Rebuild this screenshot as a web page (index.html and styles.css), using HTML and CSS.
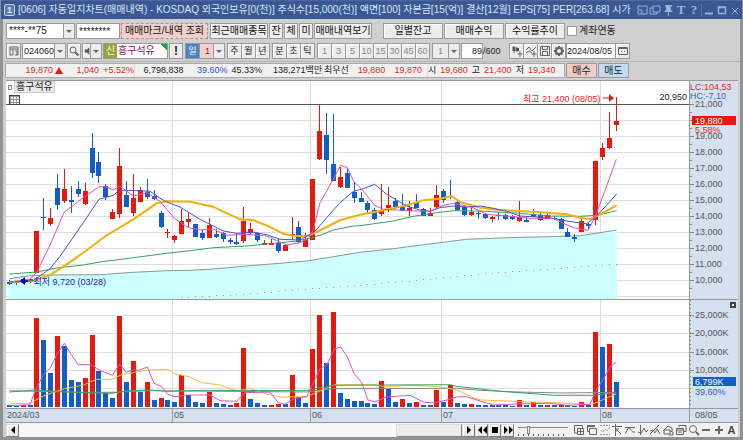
FILE: index.html
```html
<!DOCTYPE html>
<html lang="ko">
<head>
  <meta charset="UTF-8">
  <meta name="viewport" content="width=device-width, initial-scale=1.0">
  <title>[0606] 자동일지차트</title>
  <link rel="stylesheet" href="styles.css">
</head>
<body>
  <div class="window">
    <header class="titlebar">
      <span class="badge">1</span>
      <h1>[0606] 자동일지차트(매매내역) - KOSDAQ 외국인보유[0(천)] 주식수[15,000(천)] 액면[100] 자본금[15(억)] 결산[12월] EPS[75] PER[263.68] 시가</h1>
      <div class="win-buttons">
        <button aria-label="화면 크기"><svg viewBox="0 0 12 12"><path d="M2 5V2h9v8H6M2 6h4v4H2z"/></svg></button>
        <button aria-label="복제"><svg viewBox="0 0 12 12"><path d="M4 2h7v6H4zM4 4H1v6h7V8"/></svg></button>
        <button aria-label="고정"><svg viewBox="0 0 12 12"><path class="solid" d="M3 1h7v1L9 3v3l2 2H7v4H6V8H2l2-2V3L3 2z"/></svg></button>
        <button class="letter" aria-label="글꼴">T</button>
        <button class="letter" aria-label="도움말">?</button>
        <i></i>
        <button aria-label="최소화"><svg viewBox="0 0 12 12"><path d="M2 9.5h8" stroke-width="2"/></svg></button>
        <button aria-label="최대화"><svg viewBox="0 0 12 12"><path d="M2.5 3.5h7v6h-7zM2 3h8" stroke-width="1.5"/></svg></button>
        <button aria-label="닫기"><svg viewBox="0 0 12 12"><path d="M3 4l6 6M9 4l-6 6"/></svg></button>
      </div>
    </header>

    <div class="toolbar account-bar">
      <span class="drop w-account"><select aria-label="계좌번호"><option>****-**75</option></select></span>
      <input class="w-pass" type="text" value="********" aria-label="비밀번호">
      <button class="w-mark active">매매마크/내역 조회</button>
      <button class="w-58 gap">최근매매종목</button>
      <button class="w-14">잔</button>
      <button class="w-14">체</button>
      <button class="w-14">미</button>
      <button class="w-58">매매내역보기</button>
      <button class="w-60 gap-wide">일별잔고</button>
      <button class="w-60">매매수익</button>
      <button class="w-60">수익률추이</button>
      <label class="check"><input type="checkbox">계좌연동</label>
    </div>

    <div class="toolbar code-bar">
      <button class="w-15" aria-label="메뉴"><svg viewBox="0 0 12 12"><path d="M2 10V2h8v8H7M2 4h8M5 4v6H2"/><path d="M7 6h2v4"/></svg></button>
      <span class="drop w-code"><input type="text" value="024060" aria-label="종목코드"></span>
      <button class="w-14" aria-label="종목검색"><svg viewBox="0 0 12 12"><circle cx="5" cy="5" r="3"/><path d="M7 7l3.500 3.500" stroke-width="2"/></svg></button>
      <span class="drop w-sound"><button aria-label="소리"><svg viewBox="0 0 12 12"><path class="solid" d="M1 4h3l3-3v10L4 8H1z"/><path d="M8 4h3M8 6h3M8 8h3"/></svg></button></span>
      <div class="stock"><b>신</b><span>흥구석유</span></div>
      <button class="w-14 strong">!</button>
      <div class="group">
        <button class="day">일</button>
        <span class="drop w-days"><select aria-label="일수"><option>1</option></select></span>
      </div>
      <div class="group">
        <button>주</button><button>월</button><button>년</button>
      </div>
      <div class="group">
        <button>분</button><button>초</button><button>틱</button>
      </div>
      <div class="group minutes">
        <button disabled>1</button><button disabled>3</button><button disabled>5</button><button disabled>10</button><button disabled>15</button><button disabled>30</button><button disabled>45</button><button disabled>60</button>
      </div>
      <span class="drop w-step gap"><select aria-label="간격" disabled><option>1</option></select></span>
      <input class="w-count" type="text" value="89" id="count" aria-label="조회 개수">
      <label class="total" for="count">/600</label>
      <div class="group">
        <button aria-label="차트유형"><svg viewBox="0 0 12 12"><path d="M3 1v7M6 2v5M9 6v6M6.500 9h5"/><path class="solid" d="M1.500 2h3v4h-3zM5 3h3v3H5z"/></svg></button>
        <button aria-label="지표추가"><svg viewBox="0 0 12 12"><path d="M1 5l3-3 3 4 4-4M1 8l3-2 3 2M9 6v6M6.500 9h5"/></svg></button>
        <button aria-label="저장"><svg viewBox="0 0 12 12"><path d="M1.500 1.500h9v9h-9zM3.500 1.500v3h5v-3M3.500 10.500v-4h5v4"/></svg></button>
        <button aria-label="설정"><svg viewBox="0 0 12 12"><circle cx="6" cy="6" r="3" stroke-width="2"/><path d="M6 1v2M6 9v2M1 6h2M9 6h2M2.500 2.500l1 1M8.500 8.500l1 1M9.500 2.500l-1 1M3.500 8.500l-1 1" stroke-width="2"/></svg></button>
      </div>
      <div class="group date">
        <input type="text" value="2024/08/05" aria-label="기준일">
        <button aria-label="달력"><svg viewBox="0 0 12 12"><path d="M1.500 2.500h9v7h-9zM2 3.500h8M4.500 6v1M7.500 6v1"/></svg></button>
      </div>
    </div>

    <div class="quote-bar">
      <div class="quotes">
        <div class="cell change"><span>19,870</span><i class="up"></i><span class="diff">1,040</span><span class="rate">+5.52%</span></div>
        <div class="cell volume"><span>6,798,838</span><span class="blue">39.60%</span><span>45.33%</span></div>
        <div class="cell amount">138,271백만</div>
        <div class="cell best"><b>최우선</b><span>19,880</span><span>19,870</span></div>
        <div class="cell ohl"><b>시</b><span>19,680</span><b>고</b><span>21,400</span><b>저</b><span>19,340</span></div>
      </div>
      <button class="buy">매수</button>
      <button class="sell">매도</button>
    </div>

    <main class="chart">
      <section class="panel price-panel">
        <div class="plot">
          <svg id="priceChart" viewBox="0 0 683 218" preserveAspectRatio="none"></svg>
          <div class="legend"><i></i><span>흥구석유</span></div>
          <div class="table-icon"></div>
          <span class="note high">최고 21,400 (08/05) <svg viewBox="0 0 12 8"><path d="M0 4h7" stroke="#e8180c"/><path fill="#e8180c" d="M6 0l5 4-5 4z"/></svg></span>
          <span class="note base">20,950</span>
          <span class="note low"><svg viewBox="0 0 12 8"><path fill="#0000f0" d="M6 0v8L1 4zM6 3h3v2H6z"/></svg> 최저 9,720 (03/28)</span>
        </div>
        <svg class="axis" id="priceAxis" width="49" height="218"></svg>
      </section>
      <section class="panel volume-panel">
        <div class="plot">
          <svg id="volumeChart" viewBox="0 0 683 108" preserveAspectRatio="none"></svg>
        </div>
        <svg class="axis" id="volumeAxis" width="49" height="108"></svg>
      </section>
      <div class="time-axis">
        <span>2024/03</span><span>05</span><span>06</span><span>07</span><span>08</span><span class="today">08/05</span>
      </div>
    </main>

    <footer class="bottom-bar">
      <button class="step" aria-label="왼쪽"><svg viewBox="0 0 12 12"><path class="solid" d="M8 2v8L4 6z"/></svg></button>
      <div class="track"><div class="thumb"></div></div>
      <button class="step" aria-label="오른쪽"><svg viewBox="0 0 12 12"><path class="solid" d="M4 2v8l4-4z"/></svg></button>
      <button class="step" aria-label="뒤로"><svg viewBox="0 0 12 12"><path class="solid" d="M6 2v8L2 6zM11 2v8L7 6z"/></svg></button>
      <button class="step" aria-label="정지"><svg viewBox="0 0 12 12"><path class="solid" d="M3 3h6v6H3z"/></svg></button>
      <button class="step" aria-label="앞으로"><svg viewBox="0 0 12 12"><path class="solid" d="M2 2v8l4-4zM7 2v8l4-4z"/></svg></button>
      <input class="speed" type="range" min="0" max="10" value="2" aria-label="속도">
      <div class="draw-tools">
        <button aria-label="분할"><svg viewBox="0 0 12 12"><path d="M4 9H1.500V1.500h8V4M4.500 4.500h6v6h-6zM7.500 5v5M5 7.500h5"/></svg></button>
        <button aria-label="겹치기"><svg viewBox="0 0 12 12"><path d="M3 7.500H1.500v-6h7V3M3.500 4.500h7v6h-7zM2 2.500h6"/></svg></button>
        <button class="faint" aria-label="추세"><svg viewBox="0 0 12 12"><path d="M1 1.500h10M1 10.500h10M2 6l2 2 2-3 2 2 3-4" stroke-dasharray="2 1"/></svg></button>
        <button class="on" aria-label="십자선"><svg viewBox="0 0 12 12"><path d="M1 2.500h10M4.500 0v12M5 5l5 5M5 5v3M5 5h3"/></svg></button>
        <button aria-label="수평선"><svg viewBox="0 0 12 12"><path d="M1 3.500h10M1 9c2 0 2-5 4-5s2 5 6 4"/></svg></button>
        <button aria-label="수직선"><svg viewBox="0 0 12 12"><path d="M3.500 1v10M1 8l3 1 3-5 2 4 2-2"/></svg></button>
        <button aria-label="추세선"><svg viewBox="0 0 12 12"><path d="M1 10l9-9M1 7l3-1 2 3 2-4 3 5"/></svg></button>
        <button aria-label="도형"><svg viewBox="0 0 12 12"><path d="M1 7l5-5 4 2v3M2 6h6v4H2zM8 7l3 1v3H7"/></svg></button>
        <button aria-label="창 목록"><svg viewBox="0 0 12 12"><path d="M4 3V1.500h7v6H9M1.500 4.500h7v6h-7zM1.500 6h7M3 8h4"/></svg></button>
        <button aria-label="돋보기"><svg viewBox="0 0 12 12"><circle cx="5" cy="5" r="3.500"/><path d="M8 8l3 3" stroke-width="2"/></svg></button>
        <button aria-label="축소"><svg viewBox="0 0 12 12"><path d="M2 6h8" stroke-width="2"/></svg></button>
        <button aria-label="확대"><svg viewBox="0 0 12 12"><path d="M2 6h8M6 2v8" stroke-width="2"/></svg></button>
        <button class="auto">A</button>
      </div>
    </footer>
  </div>
  <script src="script.js"></script>
</body>
</html>
```

FILE: styles.css
```css
* {
  box-sizing: border-box;
}
body {
  margin: 0;
  font-family: "Liberation Sans", "Noto Sans CJK KR", sans-serif;
  font-size: 9px;
  line-height: 12px;
  color: #222;
}
button, input, select {
  font: inherit;
  color: inherit;
  margin: 0;
  padding: 0;
  border: 1px solid #999;
  border-radius: 0;
  height: 16px;
  background: #fff;
  min-width: 0;
}
button {
  background: #ececec;
  box-shadow: inset 1px 1px #fff;
  white-space: nowrap;
  display: flex;
  align-items: center;
  justify-content: center;
  flex-shrink: 0;
}
button svg {
  width: 12px;
  height: 12px;
  fill: none;
  stroke: #666;
  flex-shrink: 0;
}
svg .solid {
  fill: #555;
  stroke: none;
}
.window {
  min-height: 100vh;
  border: 3px solid #929292;
  border-top: 1px solid #53649a;
  border-bottom-width: 4px;
  background: #d0d0d0;
  display: flex;
  flex-direction: column;
}

/* title bar */
.titlebar {
  height: 18px;
  margin: 0 -2px;
  padding: 0 1px 0 3px;
  background: #3a5896;
  color: #dfe6f5;
  display: flex;
  align-items: center;
  gap: 3px;
}
.badge {
  width: 11px;
  height: 12px;
  border: 1px solid #c8d3ec;
  border-radius: 2px;
  background: #5b78b3;
  font-weight: bold;
  line-height: 10px;
  text-align: center;
}
.titlebar h1 {
  flex: 1;
  min-width: 0;
  margin: 0;
  font-size: 10px;
  font-weight: normal;
  white-space: nowrap;
  overflow: hidden;
}
.win-buttons {
  display: flex;
  align-items: center;
  gap: 1px;
}
.win-buttons button {
  width: 12px;
  height: 14px;
  border: none;
  background: none;
  box-shadow: none;
}
.win-buttons svg {
  stroke: #9fb0d6;
}
.win-buttons .solid {
  fill: #9fb0d6;
}
.win-buttons .letter {
  font-family: "Liberation Serif", serif;
  font-size: 13px;
  font-weight: bold;
  color: #9fb0d6;
}
.win-buttons i {
  width: 1px;
  height: 12px;
  background: #5d76ad;
}

/* toolbars */
.toolbar {
  display: flex;
  align-items: center;
  gap: 1px;
  padding: 0 3px;
  height: 20px;
}
.account-bar {
  margin-top: 2px;
  font-size: 10px;
}
.account-bar button {
  color: #111;
}
.w-account {
  width: 69px;
}
.w-pass {
  width: 44px;
  padding-left: 2px;
}
.w-mark {
  width: 87px;
}
.toolbar .active {
  background: #f3d0cb;
  border: 1px dashed #b98d88;
  box-shadow: none;
}
.w-58 {
  width: 58px;
}
.w-14 {
  width: 14px;
}
.w-15 {
  width: 15px;
}
.w-60 {
  width: 60px;
}
.w-step {
  width: 28px;
}
.w-days {
  width: 26px;
}
.w-code {
  width: 44px;
}
.w-sound {
  width: 20px;
}
.w-count {
  width: 22px;
  text-align: right;
}
.gap {
  margin-left: 1px;
}
.gap-wide {
  margin-left: 10px;
}
.check {
  display: flex;
  align-items: center;
  gap: 2px;
  padding-left: 1px;
}
.check input {
  appearance: none;
  width: 10px;
  height: 10px;
}

.drop {
  display: flex;
  position: relative;
  flex-shrink: 0;
}
.drop select, .drop input, .drop > button {
  appearance: none;
  width: 100%;
  padding: 0 10px 0 2px;
}
.drop::after {
  content: "";
  position: absolute;
  right: 1px;
  top: 1px;
  width: 10px;
  height: 14px;
  border-left: 1px solid #999;
  background: #ececec;
  pointer-events: none;
}
.drop::before {
  content: "";
  position: absolute;
  z-index: 1;
  right: 3px;
  top: 7px;
  border: 3px solid transparent;
  border-top-color: #666;
  border-bottom: none;
  pointer-events: none;
}
.code-bar .drop input {
  padding-left: 1px;
}
.drop > button svg {
  width: 9px;
}
.stock {
  display: flex;
  align-items: center;
  width: 65px;
  height: 16px;
  border: 1px solid #999;
  background: linear-gradient(45deg, transparent 92%, #1fa050 92%), #fff;
  font-size: 10px;
  color: #8c1464;
}
.stock b {
  width: 13px;
  height: 14px;
  margin-right: 1px;
  background: #97a336;
  color: #fff;
  font-weight: normal;
  line-height: 14px;
  text-align: center;
}
.strong {
  font-size: 12px;
  font-weight: bold;
}
.group {
  display: flex;
  flex-shrink: 0;
  margin-left: 1px;
}
.group > button {
  width: 15px;
  margin-right: -1px;
}
.group > button:last-child {
  margin-right: 0;
}
.group .day {
  background: #4c82c4;
  box-shadow: none;
  color: #fff;
}
.w-days select {
  background: #f3d0cb;
  color: #8e2222;
  padding-left: 5px;
}
.minutes {
  color: #888;
}
.w-step select {
  background: #ececec;
  color: #888;
  opacity: 1;
  padding-left: 5px;
}
.total {
  width: 24px;
  margin-left: -1px;
}
.date {
  margin-left: -1px;
}
.date input {
  width: 50px;
  margin-right: -1px;
}

/* quotes */
.quote-bar {
  display: flex;
  gap: 1px;
  padding: 1px 2px 0;
  border-top: 1px solid #b4b4b4;
}
.quotes {
  display: flex;
  width: 560px;
  height: 15px;
  border: 1px solid #aaa;
  background: #f1f1f1;
  line-height: 13px;
}
.cell {
  display: flex;
  flex-shrink: 0;
  justify-content: flex-end;
  border-right: 1px solid #ddd;
  white-space: nowrap;
}
.cell:last-child {
  border-right: none;
}
.cell b {
  font-weight: normal;
}
.change, .best span, .ohl span {
  color: #e8281c;
}
.change {
  width: 129px;
}
.up {
  margin: 3px 0 0 2px;
  border: 4px solid transparent;
  border-top: none;
  border-bottom: 7px solid #e8180c;
  height: 0;
}
.diff {
  width: 36px;
  text-align: right;
}
.rate {
  width: 35px;
  text-align: right;
}
.volume {
  width: 128px;
  gap: 4px;
}
.volume .blue {
  width: 40px;
  color: #2b56c8;
  text-align: right;
}
.amount {
  width: 60px;
}
.best {
  width: 105px;
  gap: 9px;
  justify-content: flex-start;
  padding-left: 1px;
}
.ohl {
  flex: 1;
  justify-content: flex-start;
  gap: 4px;
}
.quote-bar button {
  width: 31px;
  height: 15px;
  font-size: 10px;
  box-shadow: none;
}
.quote-bar .buy {
  background: #f3ccc8;
}
.quote-bar .sell {
  background: #c3dbf3;
}

/* chart */
.chart {
  margin: 2px 2px 0 3px;
  border-top: 1px solid #999;
  background: #fff;
}
.panel {
  display: flex;
  border-bottom: 1px solid #999;
}
.plot {
  flex: 1;
  min-width: 0;
  position: relative;
}
.plot > svg {
  display: block;
  width: 100%;
}
.price-panel {
  height: 219px;
}
.price-panel .plot > svg {
  height: 218px;
}
.volume-panel {
  height: 109px;
}
.volume-panel .plot > svg {
  height: 108px;
}
.plot rect, .axis rect {
  shape-rendering: crispEdges;
}
.axis {
  display: block;
  flex-shrink: 0;
  background: #d6e1ef;
  font-size: 9px;
}
.legend {
  position: absolute;
  left: 2px;
  top: 0;
  display: flex;
  align-items: center;
  gap: 2px;
  font-size: 10px;
}
.legend i {
  width: 4px;
  height: 5px;
  border: 1px solid #888;
}
.legend span {
  padding: 0 1px;
  line-height: 10px;
  background: #eaeaea;
  border: 1px solid #ccc;
}
.table-icon {
  position: absolute;
  left: 3px;
  top: 14px;
  width: 11px;
  height: 10px;
  border: 1px solid #444;
  background: repeating-linear-gradient(#999 0 1px, transparent 1px 3px), repeating-linear-gradient(90deg, #999 0 1px, #eee 1px 3px);
}
.note {
  position: absolute;
  white-space: nowrap;
}
.note svg {
  width: 12px;
  height: 8px;
}
.high {
  right: 74px;
  top: 12px;
  color: #f02020;
}
.base {
  right: 2px;
  top: 10px;
}
.low {
  left: 13px;
  top: 195px;
  color: #2020e0;
}
.time-axis {
  display: grid;
  grid-template-columns: 166fr 138fr 131fr 159fr 89fr 49px;
  height: 14px;
  border-bottom: 1px solid #999;
  background: #d6e1ef;
  color: #555;
}
.time-axis span {
  padding-left: 1px;
}
.time-axis span + span {
  border-left: 1px solid #999;
}
.time-axis .today {
  padding-left: 5px;
}

/* scroll bar and drawing tools */
.bottom-bar {
  display: flex;
  align-items: center;
  height: 14px;
  margin: 0 2px 0 3px;
  background: #f1f1f1;
}
.bottom-bar button {
  width: 13px;
  height: 13px;
}
.bottom-bar .step {
  border-color: #ddd #777 #777 #ddd;
}
.step .solid {
  fill: #000;
}
.track {
  flex: 1;
  display: flex;
  justify-content: flex-end;
  background: #f8f8f8;
}
.thumb {
  width: 15%;
  height: 13px;
  border: 1px solid;
  border-color: #ddd #888 #888 #ddd;
  background: #ececec;
}
.speed {
  appearance: none;
  width: 50px;
  height: 12px;
  margin: 0 5px 0 4px;
  border: none;
  background: linear-gradient(#888, #888) 0 3px / 100% 1px no-repeat, repeating-linear-gradient(90deg, #555 0 1px, transparent 1px 5px) 0 10px / 100% 2px no-repeat;
}
.speed::-webkit-slider-thumb {
  appearance: none;
  width: 3px;
  height: 8px;
  border: 1px solid #888;
  background: #eee;
}
.draw-tools {
  display: flex;
  width: 165px;
}
.bottom-bar .draw-tools button {
  flex: 1;
  border: none;
  background: none;
  box-shadow: none;
}
.draw-tools .faint {
  opacity: 0.6;
}
.bottom-bar .draw-tools .on {
  background: #fff;
}
.bottom-bar .auto {
  font-size: 11px;
  font-weight: bold;
  color: #444;
}
```

FILE: script.js
```js
const RED = "#e8180c";
const BLUE = "#125ccc";

// Chart units: 3 units per pixel, measured from the panel origin below
const UNIT = 3;
const LEFT = 6;
const PRICE_TOP = 5;
const VOLUME_TOP = 4;

// up/down, high, body top, body bottom, low, volume top
const candles = [
  ["b",612,618,624,628,327],["b",614,618,622,626,329],["b",605,608,620,622,327],["r",606,609,618,620,327],
  ["r",465,465,591,591,66],["b",366,423,427,462,132],["r",396,426,445,450,231],["b",295,336,387,402,120],
  ["r",280,338,374,380,150],["b",330,372,378,410,252],["b",316,339,354,362,259],["r",322,345,383,387,246],
  ["b",172,217,291,306,118],["b",227,257,300,322,226],["b",325,330,363,373,291],["r",400,408,428,430,307],
  ["r",215,270,413,427,60],["b",314,358,392,394,259],["r",293,367,411,420,196],["r",333,342,377,378,288],
  ["b",309,347,363,370,259],["b",342,360,370,372,311],["b",405,411,453,455,306],["r",459,467,472,487,312],
  ["r",477,481,492,502,318],["r",398,435,474,474,238],["r",408,428,438,452,297],["b",443,445,482,482,318],
  ["b",462,470,486,492,321],["r",425,447,486,486,288],["b",460,474,483,486,320],["b",468,472,489,497,324],
  ["b",486,491,499,503,327],["b",472,497,505,507,322],["r",393,436,494,500,156],["r",441,459,472,478,309],
  ["b",467,472,492,497,320],["r",492,502,506,506,327],["r",488,502,506,506,327],["b",490,500,525,530,324],
  ["r",505,507,525,525,324],["r",422,474,478,492,237],["b",435,453,498,502,303],["r",472,488,512,514,322],
  ["r",310,310,492,492,159],["r",84,165,250,252,57],["b",111,177,252,293,202],["b",113,264,315,315,48],
  ["r",273,302,333,335,291],["b",275,290,335,335,309],["b",318,347,366,380,316],["b",348,365,377,378,315],
  ["b",375,380,402,410,322],["b",395,402,430,432,324],["r",323,401,414,420,255],["r",333,387,397,408,279],
  ["b",367,374,397,399,318],["b",354,393,404,405,309],["r",376,397,405,420,322],["b",354,379,395,397,318],
  ["b",395,400,420,420,327],["r",397,411,419,421,327],["r",328,358,392,397,282],["b",338,345,371,380,318],
  ["b",313,359,363,370,267],["b",375,378,402,405,322],["b",388,392,418,420,324],["r",393,408,418,420,324],
  ["b",402,411,415,430,327],["b",412,414,425,428,327],["r",420,424,428,437,327],["b",407,417,421,432,327],
  ["b",415,418,430,432,328],["b",418,420,430,432,330],["r",375,423,436,438,311],["b",420,433,437,438,328],
  ["b",400,414,422,424,318],["b",405,416,432,436,327],["r",408,418,430,430,327],["b",420,426,430,432,328],
  ["b",425,429,459,460,327],["b",457,468,484,484,328],["b",475,484,488,499,330],["r",423,434,468,468,318],
  ["b",440,444,450,460,328],["r",255,255,432,447,108],["r",201,216,242,252,153],["r",107,186,215,219,143],
  ["r",62,135,148,164,258]
];

// Volume bars are coloured by the change in volume
const risingVolume = [2, 4, 7, 11, 12, 16, 18, 20, 22, 25, 29, 33, 34, 38, 39, 41, 44, 45, 47, 54, 57, 59, 62, 64, 67, 74, 76, 78, 80, 83, 85, 87];

const priceLines = {
  base: [28,608,80,600,130,597,300,596,400,589,500,584,570,583,640,579,740,570,840,562,920,555,1000,542,1080,529,1180,518,1280,505,1400,490,1560,484,1650,482,1740,479,1800,470,1850,462],
  green: [28,594,110,588,170,576,250,567,300,558,400,545,500,532,570,524,640,515,740,510,840,500,890,495,930,487,960,478,1000,462,1060,450,1080,449,1180,435,1240,421,1310,410,1360,404,1440,405,1560,412,1650,420,1740,421,1790,418,1850,404],
  orange: [28,618,100,615,150,597,200,565,250,530,320,478,400,430,470,382,500,376,570,377,640,392,670,407,720,430,760,433,800,448,850,473,880,479,920,481,950,468,1020,433,1080,416,1150,403,1220,388,1270,373,1320,368,1355,360,1380,378,1440,395,1500,402,1600,407,1700,415,1740,425,1770,430,1795,418,1850,388],
  blue: [28,618,100,614,150,578,180,541,250,440,297,370,340,358,355,345,390,343,450,346,480,366,500,378,540,393,600,430,670,465,710,472,760,469,800,476,840,490,900,492,945,466,980,425,1020,380,1060,346,1090,338,1124,325,1160,355,1220,390,1260,402,1290,406,1320,395,1360,390,1400,393,1440,390,1480,397,1520,406,1560,420,1650,425,1700,435,1740,441,1760,443,1790,420,1850,354],
  pink: [28,618,90,610,111,588,151,505,193,408,254,362,297,332,317,332,340,342,359,330,400,360,442,350,482,378,524,428,565,455,600,462,640,459,680,478,740,475,800,480,860,507,900,500,925,488,940,460,960,380,980,345,1005,300,1022,268,1042,275,1060,314,1085,340,1124,388,1150,400,1230,404,1290,406,1330,388,1360,382,1420,395,1460,415,1520,420,1600,428,1660,428,1720,455,1765,463,1787,418,1820,330,1849,250],
  dots: [540,665,730,655,915,640,1105,626,1310,608,1475,592,1643,579,1852,565]
};

const volumeLines = {
  gray: [28,284,240,289,340,289,450,284,920,288,960,283,1000,278,1370,277,1440,283,1550,288,1690,291,1848,289],
  orange: [28,323,90,322,130,300,193,278,250,267,290,250,335,250,360,238,410,228,450,222,503,220,525,233,570,243,605,260,660,267,710,285,750,277,790,292,840,303,920,302,960,285,1003,266,1120,265,1150,272,1240,268,1320,272,1370,282,1420,305,1445,312,1500,314,1570,317,1660,320,1740,324,1775,325,1800,315,1848,294],
  green: [28,288,105,282,180,286,240,290,335,292,380,284,450,282,500,286,620,283,920,284,960,275,1000,268,1350,266,1370,271,1440,279,1500,286,1600,293,1660,298,1780,298,1848,290],
  pink: [28,329,90,326,105,285,130,237,151,216,171,174,193,142,213,175,234,205,276,207,297,222,337,238,359,204,379,229,400,222,420,222,442,213,462,262,485,272,503,295,525,302,560,297,630,297,660,314,710,316,735,290,810,288,835,320,855,325,880,308,920,302,960,218,980,207,1003,160,1022,153,1042,182,1062,232,1085,260,1104,312,1124,318,1160,303,1230,298,1270,318,1300,321,1350,310,1370,303,1400,302,1440,315,1480,327,1580,323,1650,322,1700,328,1770,325,1790,280,1810,250,1830,212,1848,199]
};

function points(list, top) {
  const out = [];
  for (let i = 0; i < list.length; i += 2) {
    out.push((list[i] / UNIT - LEFT).toFixed(1) + "," + (list[i + 1] / UNIT - top).toFixed(1));
  }
  return out.join(" ");
}

function line(list, top, color, width) {
  return `<polyline points="${points(list, top)}" fill="none" stroke="${color}" stroke-width="${width}"/>`;
}

function rect(x, y, w, h, color) {
  return `<rect x="${x}" y="${y}" width="${w}" height="${h}" fill="${color}"/>`;
}

function text(x, y, value, color) {
  return `<text x="${x}" y="${y}" fill="${color}">${value}</text>`;
}

function candleX(i) {
  return Math.round((28 + i * 20.69) / UNIT - LEFT - 0.5);
}

function valueAt(list, x) {
  for (let i = 2; i < list.length; i += 2) {
    if (x <= list[i]) {
      const part = (x - list[i - 2]) / (list[i] - list[i - 2]);
      return list[i - 1] + part * (list[i + 1] - list[i - 1]);
    }
  }
  return list[list.length - 1];
}

function monthLines(height) {
  return [166, 304, 435, 594].map(x => rect(x, 0, 1, height, "#dedede")).join("");
}

function drawPrice() {
  let svg = "";
  for (let k = 0; k < 13; k++) {
    svg += rect(0, Math.round(22.500 + k * 16.07), 683, 1, "#dedede");
  }
  svg += monthLines(218);
  svg += `<polygon points="2,218 2,199 ${points(priceLines.base, PRICE_TOP)} 611,218" fill="#ccffff"/>`;
  svg += rect(0, 23, 683, 1, "#555");
  svg += line(priceLines.base, PRICE_TOP, "#8c9696", 1);
  for (let i = 25; i < candles.length; i++) {
    const y = valueAt(priceLines.dots, 28 + i * 20.69);
    svg += rect(candleX(i), Math.round(y / UNIT - PRICE_TOP - 0.5), 1, 1, "#f08030");
  }
  candles.forEach((c, i) => {
    const x = candleX(i);
    const color = c[0] === "r" ? RED : BLUE;
    const [high, top, bottom, low] = c.slice(1, 5).map(v => Math.round(v / UNIT - PRICE_TOP));
    svg += rect(x, high, 1, low - high, color);
    svg += rect(x - 2, top, 5, Math.max(1, bottom - top), color);
  });
  svg += line(priceLines.green, PRICE_TOP, "#35a35c", 1);
  svg += line(priceLines.orange, PRICE_TOP, "#f0b010", 2);
  svg += line(priceLines.blue, PRICE_TOP, "#4858c0", 1);
  svg += line(priceLines.pink, PRICE_TOP, "#e050c8", 1);
  document.getElementById("priceChart").innerHTML = svg;
}

function drawVolume() {
  let svg = "";
  for (let k = 0; k < 5; k++) {
    svg += rect(0, Math.round(15 + k * 18.33), 683, 1, "#dedede");
  }
  svg += monthLines(108);
  candles.forEach((c, i) => {
    const y = Math.round(c[5] / UNIT - VOLUME_TOP);
    svg += rect(candleX(i) - 2, y, 5, 107 - y, risingVolume.includes(i) ? RED : BLUE);
  });
  svg += line(volumeLines.gray, VOLUME_TOP, "#888", 1);
  svg += line(volumeLines.orange, VOLUME_TOP, "#f0c040", 1);
  svg += line(volumeLines.green, VOLUME_TOP, "#35a35c", 1);
  svg += line(volumeLines.pink, VOLUME_TOP, "#e050c8", 1);
  document.getElementById("volumeChart").innerHTML = svg;
}

function drawAxes() {
  let svg = rect(0, 0, 1, 218, "#999");
  for (let k = 0; k < 12; k++) {
    const y = Math.round(22.500 + k * 16.07);
    svg += rect(1, y, 4, 1, "#888") + rect(1, y + 8, 2, 1, "#888");
    // 20,000 sits behind the current price
    if (k !== 1) {
      svg += text(6, y + 3, (21 - k) + ",000", "#555");
    }
  }
  svg += rect(1, 0, 48, 19, "#d6e1ef");
  svg += text(1, 9, "LC:104,53", "#e8281c") + text(1, 18, "HC:-7,10", "#2b66cc");
  svg += rect(3, 35, 44, 9, RED) + text(6, 43, "19,880", "#fff");
  svg += rect(5, 44, 30, 8, "#d6e1ef") + text(6, 52, "5,58%", "#e8281c");
  document.getElementById("priceAxis").innerHTML = svg;

  svg = rect(0, 0, 1, 108, "#999");
  for (let y = 0; y < 107; y += 4) {
    svg += rect(1, y, 1, 1, "#888");
  }
  ["25,000K", "20,000K", "15,000K", "10,000K"].forEach((label, k) => {
    const y = Math.round(15 + k * 18.33);
    svg += rect(1, y, 4, 1, "#888") + text(6, y + 3, label, "#555");
  });
  svg += rect(4, 77, 43, 9, BLUE) + text(6, 85, "6,799K", "#fff");
  svg += text(6, 95, "39,60%", "#2b66cc");
  svg += rect(41, 2, 6, 6, "#444") + rect(43, 4, 2, 2, "#fff");
  document.getElementById("volumeAxis").innerHTML = svg;
}

drawPrice();
drawVolume();
drawAxes();
```
